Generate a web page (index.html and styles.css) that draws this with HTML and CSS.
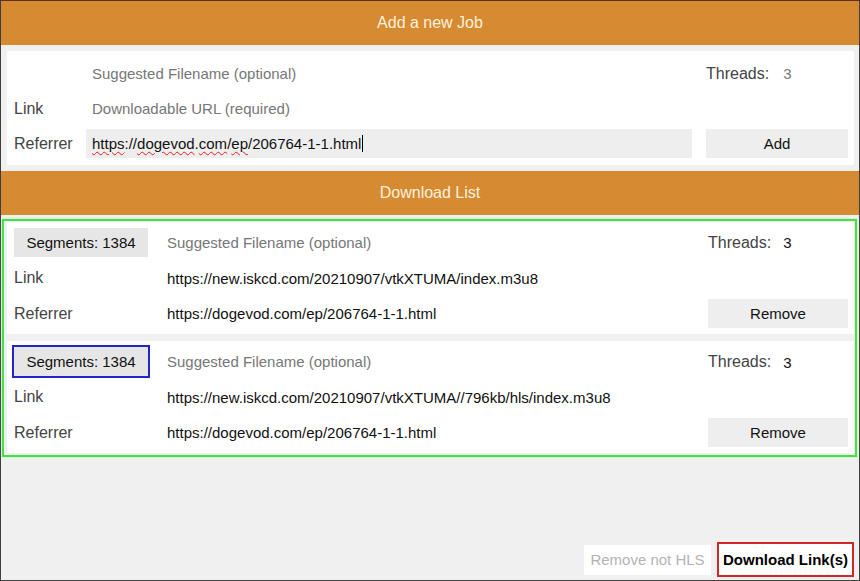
FILE: index.html
```html
<!DOCTYPE html>
<html lang="en">
  <head>
    <meta charset="UTF-8" />
    <meta name="viewport" content="width=device-width, initial-scale=1.0" />
    <title>HLS Downloader</title>
    <link rel="stylesheet" href="styles.css">
  </head>
  <body>
    <div class="window">
      <div class="bar">Add a new Job</div>

      <div class="panel new-job">
        <div class="label"></div>
        <input class="field" type="text" placeholder="Suggested Filename (optional)" />
        <div class="threads">Threads:<span class="count muted">3</span></div>

        <div class="label">Link</div>
        <input class="field" type="text" placeholder="Downloadable URL (required)" />
        <div></div>

        <div class="label">Referrer</div>
        <div class="field filled">
          <span class="typo">https</span>://<span class="typo">dogevod</span>.<span class="typo">com</span>/<span class="typo">ep</span>/206764-1-1.html<span class="caret"></span>
        </div>
        <button class="btn">Add</button>
      </div>

      <div class="bar list-bar">Download List</div>

      <div class="job-list">
        <div class="panel job">
          <button class="btn segments">Segments: 1384</button>
          <input class="field" type="text" placeholder="Suggested Filename (optional)" />
          <div class="threads">Threads:<span class="count">3</span></div>

          <div class="label">Link</div>
          <div class="field value">https://new.iskcd.com/20210907/vtkXTUMA/index.m3u8</div>
          <div></div>

          <div class="label">Referrer</div>
          <div class="field value">https://dogevod.com/ep/206764-1-1.html</div>
          <button class="btn">Remove</button>
        </div>

        <div class="panel job">
          <button class="btn segments focused">Segments: 1384</button>
          <input class="field" type="text" placeholder="Suggested Filename (optional)" />
          <div class="threads">Threads:<span class="count low">3</span></div>

          <div class="label">Link</div>
          <div class="field value">https://new.iskcd.com/20210907/vtkXTUMA//796kb/hls/index.m3u8</div>
          <div></div>

          <div class="label">Referrer</div>
          <div class="field value">https://dogevod.com/ep/206764-1-1.html</div>
          <button class="btn">Remove</button>
        </div>
      </div>

      <div class="footer">
        <button class="btn-plain" disabled>Remove not HLS</button>
        <button class="btn-plain primary">Download Link(s)</button>
      </div>
    </div>
  </body>
</html>
```

FILE: styles.css
```css
html,
body {
  margin: 0;
  padding: 0;
  height: 100%;
}
body {
  font-family: "Liberation Sans", Arial, sans-serif;
  background-color: #f0f0f0;
  color: #111;
}
.window {
  box-sizing: border-box;
  height: 100vh;
  display: flex;
  flex-direction: column;
  border-top: 1px solid #5e2e17;
  border-left: 1px solid #3e3e3e;
  border-right: 1px solid #3e3e3e;
  border-bottom: 1px solid #444;
  background-color: #f0f0f0;
}
.bar {
  height: 44px;
  flex-shrink: 0;
  display: flex;
  align-items: center;
  justify-content: center;
  background-color: #d68a32;
  color: #fdf1dc;
  font-size: 16px;
}
.list-bar {
  margin-bottom: 4px;
}
.panel {
  background-color: #fff;
  display: grid;
  align-items: center;
  row-gap: 6px;
}
.new-job {
  grid-template-columns: 58px 1fr 142px;
  grid-template-rows: 29px 29px 29px;
  column-gap: 14px;
  padding: 8px 6px 7px 7px;
  margin: 6px 5px 6px 6px;
}
.label {
  font-size: 16px;
  color: #444;
}
.field {
  box-sizing: border-box;
  height: 29px;
  width: 100%;
  border: none;
  outline: none;
  padding: 0 6px;
  font-family: inherit;
  font-size: 15px;
  color: #111;
  background: transparent;
  display: flex;
  align-items: center;
}
.field::placeholder {
  color: #777;
}
.field.filled {
  background-color: #eee;
  white-space: pre;
}
.typo {
  text-decoration: underline wavy #e02020;
  text-decoration-thickness: 1px;
  text-underline-offset: 2px;
}
.caret {
  display: inline-block;
  width: 1px;
  height: 17px;
  background-color: #000;
  margin-left: 1px;
}
.threads {
  font-size: 16px;
  color: #444;
  display: flex;
  align-items: center;
}
.count {
  font-size: 15px;
  color: #111;
  margin-left: 12px;
}
.count.muted {
  color: #777;
  margin-left: 14px;
}
.count.low {
  position: relative;
  top: 1px;
}
.btn {
  box-sizing: border-box;
  height: 29px;
  width: 100%;
  border: none;
  background-color: #eee;
  font-family: inherit;
  font-size: 15px;
  color: #111;
  padding: 0;
}
.job-list {
  margin: 0 2px 0 1px;
  padding: 1px 1px 2px 3px;
  border: 2px solid #47de47;
  box-shadow: 0 0 2px #9cf59c;
  display: flex;
  flex-direction: column;
  gap: 7px;
}
.job {
  grid-template-columns: 134px 1fr 140px;
  grid-template-rows: 29px 29px 29px;
  column-gap: 13px;
  row-gap: 6.5px;
  padding: 6px 6px 6px 7px;
}
.job .value {
  padding-left: 6px;
}
.segments {
  background-color: #e6e6e6;
}
.segments.focused {
  outline: 2px solid #2424c8;
}
.footer {
  margin-top: auto;
  display: flex;
  justify-content: flex-end;
  align-items: center;
  gap: 6px;
  padding: 0 5px 3px 0;
}
.btn-plain {
  box-sizing: border-box;
  background-color: #fff;
  border: none;
  font-family: inherit;
  font-size: 15px;
  color: #000;
  height: 30px;
  padding: 0 6px;
}
.btn-plain:disabled {
  color: #b4b4b4;
  width: 127px;
}
.btn-plain.primary {
  height: 35px;
  width: 137px;
  font-weight: bold;
  border: 2px solid #d02828;
  padding: 0 4px;
}
```
